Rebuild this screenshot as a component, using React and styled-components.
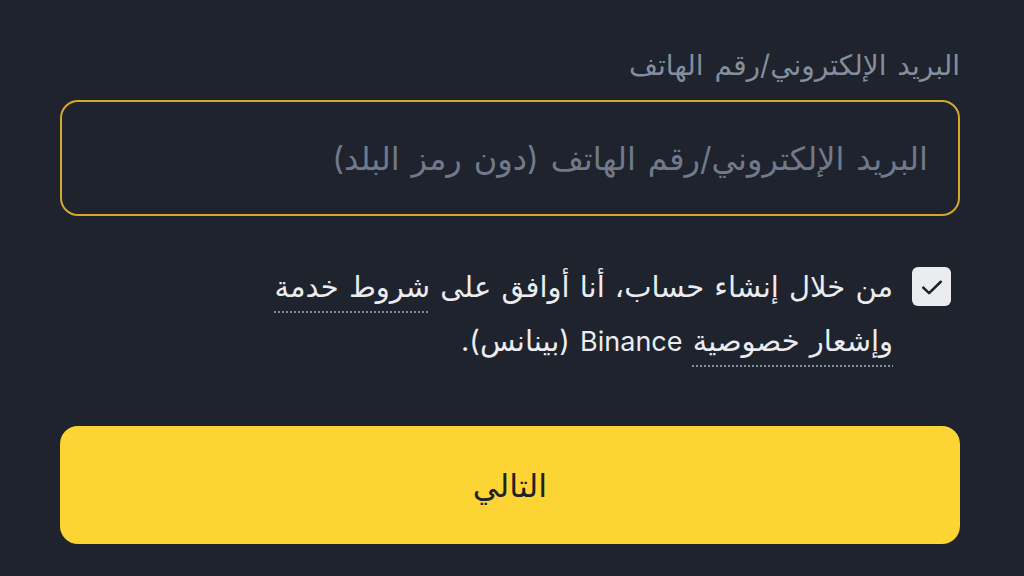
import React from "react";
import styled, { createGlobalStyle } from "styled-components";

const GlobalStyle = createGlobalStyle`
  html, body {
    margin: 0;
    padding: 0;
    background: #1f232d;
  }
  body {
    font-family: "Inter", "DejaVu Sans", sans-serif;
  }
`;

const Page = styled.div`
  direction: rtl;
  width: 1024px;
  height: 576px;
  box-sizing: border-box;
  padding: 44px 64px 0 60px;
  display: flex;
  flex-direction: column;
  overflow: hidden;
`;

const Label = styled.label`
  font-size: 28px;
  line-height: 42px;
  word-spacing: 3px;
  color: #848e9c;
`;

const Field = styled.div`
  margin-top: 14px;
  height: 116px;
  box-sizing: border-box;
  border: 2px solid #d4a92a;
  border-radius: 18px;
  display: flex;
  align-items: center;
  padding: 0 28px;
`;

const Input = styled.input`
  direction: rtl;
  flex: 1;
  background: transparent;
  border: none;
  outline: none;
  font-family: inherit;
  font-size: 32px;
  word-spacing: 3px;
  color: #eaecef;
  &::placeholder {
    color: #707a8a;
  }
`;

const Agreement = styled.div`
  margin-top: 44px;
  padding-right: 9px;
  display: flex;
  align-items: flex-start;
  gap: 19px;
`;

const Box = styled.span`
  flex: none;
  width: 39px;
  height: 39px;
  margin-top: 7px;
  border-radius: 6px;
  background: #eaecef;
  display: flex;
  align-items: center;
  justify-content: center;
`;

const Terms = styled.p`
  margin: 0;
  font-size: 29px;
  line-height: 54px;
  word-spacing: 2px;
  color: #eaecef;
`;

const Link = styled.span`
  text-decoration: underline dotted #848e9c;
  text-decoration-thickness: 2px;
  text-underline-offset: 14px;
`;

const Latin = styled.span`
  font-size: 27px;
`;

const Next = styled.button`
  margin-top: 57px;
  height: 118px;
  border: none;
  border-radius: 18px;
  background: #fcd535;
  color: #1e2329;
  font-family: inherit;
  font-size: 32px;
  cursor: pointer;
`;

export default function App() {
  return (
    <>
      <GlobalStyle />
      <Page>
        <Label>البريد الإلكتروني/رقم الهاتف</Label>
        <Field>
          <Input placeholder="البريد الإلكتروني/رقم الهاتف (دون رمز البلد)" />
        </Field>
        <Agreement>
          <Box>
            <svg width="28" height="28" viewBox="0 0 24 24" fill="none">
              <path
                d="M4.5 12.5l5 4.8L19.5 7.5"
                stroke="#1e2329"
                strokeWidth="2.2"
                strokeLinecap="round"
                strokeLinejoin="round"
              />
            </svg>
          </Box>
          <Terms>
            من خلال إنشاء حساب، أنا أوافق على <Link>شروط خدمة</Link>
            <br />
            <Link>وإشعار خصوصية</Link> <Latin>Binance</Latin> (بينانس).
          </Terms>
        </Agreement>
        <Next>التالي</Next>
      </Page>
    </>
  );
}
